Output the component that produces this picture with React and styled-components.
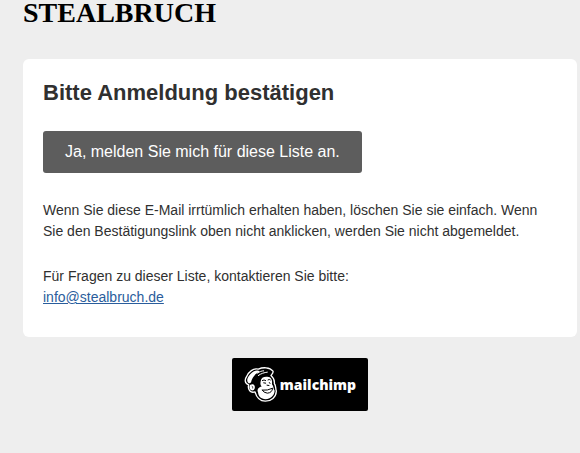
import React from "react";
import styled, { createGlobalStyle } from "styled-components";

const GlobalStyle = createGlobalStyle`
  body {
    margin: 0;
    background: #eeeeee;
    color: #303030;
    font-family: "Liberation Sans", Arial, Helvetica, sans-serif;
  }
`;

const Page = styled.div`
  display: flex;
  flex-direction: column;
  padding: 0 3px 42px 23px;
`;

const ListName = styled.h1`
  margin: 0 0 33px;
  color: #000000;
  font-family: "Liberation Serif", "Times New Roman", serif;
  font-size: 28px;
  line-height: 26px;
`;

const Card = styled.main`
  padding: 20px 20px 29px;
  border-radius: 6px;
  background: #ffffff;
`;

const Heading = styled.h2`
  margin: 0 0 24px;
  font-size: 22px;
  line-height: 28px;
`;

const ConfirmButton = styled.button`
  display: block;
  margin: 0 0 27px;
  padding: 10px 22px;
  border: 0;
  border-radius: 3px;
  background: #5d5d5d;
  color: #ffffff;
  font-family: inherit;
  font-size: 16px;
  line-height: 22px;
`;

const Paragraph = styled.p`
  margin: 0 0 24px;
  font-size: 14px;
  line-height: 21px;

  &:last-child {
    margin-bottom: 0;
  }
`;

const MailLink = styled.a`
  color: #2a5d9c;
  text-decoration: underline;
`;

const Badge = styled.a`
  display: flex;
  align-items: center;
  align-self: center;
  gap: 2px;
  margin-top: 21px;
  padding: 8px 12px;
  border-radius: 2px;
  background: #000000;
  color: #ffffff;
  font-family: "Open Sans", sans-serif;
  font-size: 14px;
  font-weight: 800;
  line-height: 20px;
  text-decoration: none;
`;

const Mascot = styled.svg`
  width: 34px;
  height: 37px;
`;

function Freddie() {
  return (
    <Mascot viewBox="60 50 102 108" aria-hidden="true">
      <path
        d="M74 105C61 100 62 88 68 80C74 66 88 54 103 58C116 52 137 51 147 64C149 69 144 73 141 77C148 83 152 92 151 101C156 107 154 114 157 124C156 142 142 154 124 154C107 154 98 144 93 126C80 131 70 119 74 105Z"
        fill="#000"
        stroke="#fff"
        strokeWidth="4"
        strokeLinejoin="round"
      />
      <path
        d="M75 101C66 95 70 85 75 78C82 67 91 60 104 63L107 66C94 71 84 83 81 98Z"
        fill="#fff"
      />
      <path
        d="M103 77C111 71 121 68 130 67M101 70C107 65 113 63 119 63"
        fill="none"
        stroke="#fff"
        strokeWidth="3"
        strokeLinecap="round"
      />
      <path
        d="M110 94C111 84 119 80 130 81C141 81 146 91 144 103C149 109 148 116 152 123C151 138 139 148 125 148C111 147 103 139 102 127C98 119 104 112 113 110C108 105 109 100 110 94Z"
        fill="#fff"
      />
      <path
        d="M79 105C88 100 95 108 92 116C90 124 80 123 77 116C76 112 76 107 79 105Z"
        fill="#fff"
      />
      <path
        d="M83 109Q88 109 86 116"
        fill="none"
        stroke="#000"
        strokeWidth="2"
      />
      <g fill="none" stroke="#000" strokeWidth="3" strokeLinecap="round">
        <path d="M115 92Q120 88 125 92M132 90Q136 87 139 90" />
        <path d="M119 99L125 100M136 98L138 101" />
        <path d="M129 106L135 107" />
        <path d="M115 121Q130 123 146 115Q144 129 130 130Q119 129 115 121" />
      </g>
    </Mascot>
  );
}

export default function App() {
  return (
    <>
      <GlobalStyle />
      <Page>
        <ListName>STEALBRUCH</ListName>
        <Card>
          <Heading>Bitte Anmeldung bestätigen</Heading>
          <ConfirmButton type="button">
            Ja, melden Sie mich für diese Liste an.
          </ConfirmButton>
          <Paragraph>
            Wenn Sie diese E-Mail irrtümlich erhalten haben, löschen Sie sie
            einfach. Wenn Sie den Bestätigungslink oben nicht anklicken, werden
            Sie nicht abgemeldet.
          </Paragraph>
          <Paragraph>
            Für Fragen zu dieser Liste, kontaktieren Sie bitte:
            <br />
            <MailLink href="mailto:info@stealbruch.de">
              info@stealbruch.de
            </MailLink>
          </Paragraph>
        </Card>
        <Badge href="#mailchimp">
          <Freddie />
          <span>mailchimp</span>
        </Badge>
      </Page>
    </>
  );
}
